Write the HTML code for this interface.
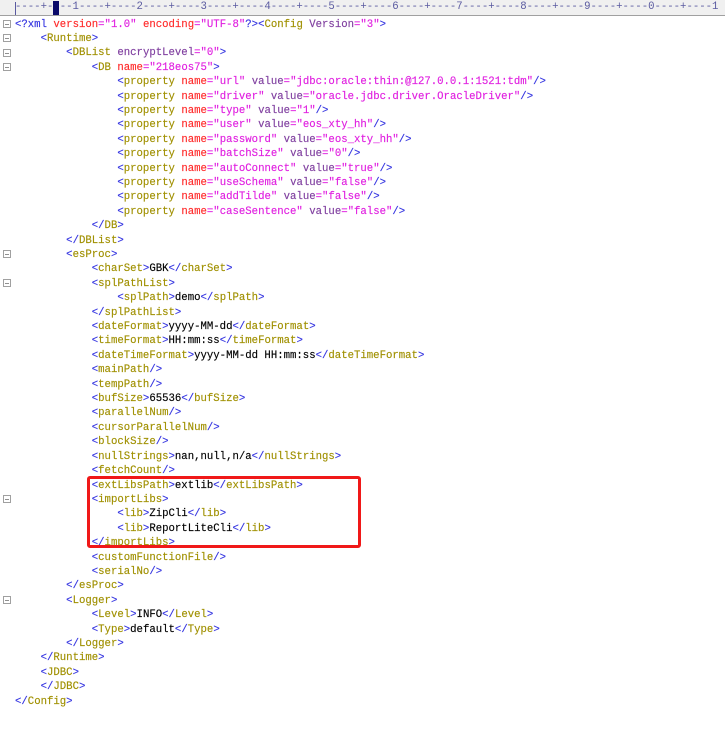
<!DOCTYPE html>
<html><head><meta charset="utf-8"><style>
body{margin:0;background:#fff;width:725px;height:752px;overflow:hidden;position:relative;font-family:"Liberation Mono",monospace;font-size:10.67px}
#ruler{position:absolute;left:0;top:0;width:725px;height:15px;background:#f0f0f0;border-bottom:1px solid #a0a0a0;color:#5a5aa0;white-space:pre;line-height:15px}
#ruler span.r{position:absolute;left:15px;top:0}
#cur{position:absolute;left:53px;top:1px;width:6px;height:14px;background:#0a0a6a}
#vl{position:absolute;left:15px;top:2px;width:1px;height:13px;background:#5a5aa0}
#code{position:absolute;left:15px;top:17.5px;white-space:pre;line-height:14.4px;color:#000;-webkit-text-stroke:0.15px currentColor}
.b{color:#3333e0}.t{color:#a09000}.a{color:#ff2a2a}.p{color:#8040a0}.v{color:#e020e0}
.f{position:absolute;left:3px;width:8px;height:8px;border:1px solid #a0a0a0;box-sizing:border-box}
.f:after{content:"";position:absolute;left:1px;right:1px;top:3px;height:1px;background:#909090}
#box{position:absolute;left:87px;top:476px;width:274px;height:72px;border:3px solid #f01818;border-radius:3px;box-sizing:border-box}
</style></head><body>
<div id="ruler"><span class="r">----+----1----+----2----+----3----+----4----+----5----+----6----+----7----+----8----+----9----+----0----+----1</span><div id="vl"></div><div id="cur"></div></div>
<div class="f" style="top:20px"></div>
<div class="f" style="top:34px"></div>
<div class="f" style="top:49px"></div>
<div class="f" style="top:63px"></div>
<div class="f" style="top:250px"></div>
<div class="f" style="top:279px"></div>
<div class="f" style="top:495px"></div>
<div class="f" style="top:596px"></div>
<div id="code"><span class="b">&lt;?xml</span> <span class="a">version</span><span class="v">="1.0"</span> <span class="a">encoding</span><span class="v">="UTF-8"</span><span class="b">?&gt;&lt;</span><span class="t">Config</span> <span class="p">Version</span><span class="v">="3"</span><span class="b">&gt;</span>
    <span class="b">&lt;</span><span class="t">Runtime</span><span class="b">&gt;</span>
        <span class="b">&lt;</span><span class="t">DBList</span> <span class="p">encryptLevel</span><span class="v">="0"</span><span class="b">&gt;</span>
            <span class="b">&lt;</span><span class="t">DB</span> <span class="a">name</span><span class="v">="218eos75"</span><span class="b">&gt;</span>
                <span class="b">&lt;</span><span class="t">property</span> <span class="a">name</span><span class="v">="url"</span> <span class="p">value</span><span class="v">="jdbc:oracle:thin:@127.0.0.1:1521:tdm"</span><span class="b">/&gt;</span>
                <span class="b">&lt;</span><span class="t">property</span> <span class="a">name</span><span class="v">="driver"</span> <span class="p">value</span><span class="v">="oracle.jdbc.driver.OracleDriver"</span><span class="b">/&gt;</span>
                <span class="b">&lt;</span><span class="t">property</span> <span class="a">name</span><span class="v">="type"</span> <span class="p">value</span><span class="v">="1"</span><span class="b">/&gt;</span>
                <span class="b">&lt;</span><span class="t">property</span> <span class="a">name</span><span class="v">="user"</span> <span class="p">value</span><span class="v">="eos_xty_hh"</span><span class="b">/&gt;</span>
                <span class="b">&lt;</span><span class="t">property</span> <span class="a">name</span><span class="v">="password"</span> <span class="p">value</span><span class="v">="eos_xty_hh"</span><span class="b">/&gt;</span>
                <span class="b">&lt;</span><span class="t">property</span> <span class="a">name</span><span class="v">="batchSize"</span> <span class="p">value</span><span class="v">="0"</span><span class="b">/&gt;</span>
                <span class="b">&lt;</span><span class="t">property</span> <span class="a">name</span><span class="v">="autoConnect"</span> <span class="p">value</span><span class="v">="true"</span><span class="b">/&gt;</span>
                <span class="b">&lt;</span><span class="t">property</span> <span class="a">name</span><span class="v">="useSchema"</span> <span class="p">value</span><span class="v">="false"</span><span class="b">/&gt;</span>
                <span class="b">&lt;</span><span class="t">property</span> <span class="a">name</span><span class="v">="addTilde"</span> <span class="p">value</span><span class="v">="false"</span><span class="b">/&gt;</span>
                <span class="b">&lt;</span><span class="t">property</span> <span class="a">name</span><span class="v">="caseSentence"</span> <span class="p">value</span><span class="v">="false"</span><span class="b">/&gt;</span>
            <span class="b">&lt;/</span><span class="t">DB</span><span class="b">&gt;</span>
        <span class="b">&lt;/</span><span class="t">DBList</span><span class="b">&gt;</span>
        <span class="b">&lt;</span><span class="t">esProc</span><span class="b">&gt;</span>
            <span class="b">&lt;</span><span class="t">charSet</span><span class="b">&gt;</span>GBK<span class="b">&lt;/</span><span class="t">charSet</span><span class="b">&gt;</span>
            <span class="b">&lt;</span><span class="t">splPathList</span><span class="b">&gt;</span>
                <span class="b">&lt;</span><span class="t">splPath</span><span class="b">&gt;</span>demo<span class="b">&lt;/</span><span class="t">splPath</span><span class="b">&gt;</span>
            <span class="b">&lt;/</span><span class="t">splPathList</span><span class="b">&gt;</span>
            <span class="b">&lt;</span><span class="t">dateFormat</span><span class="b">&gt;</span>yyyy-MM-dd<span class="b">&lt;/</span><span class="t">dateFormat</span><span class="b">&gt;</span>
            <span class="b">&lt;</span><span class="t">timeFormat</span><span class="b">&gt;</span>HH:mm:ss<span class="b">&lt;/</span><span class="t">timeFormat</span><span class="b">&gt;</span>
            <span class="b">&lt;</span><span class="t">dateTimeFormat</span><span class="b">&gt;</span>yyyy-MM-dd HH:mm:ss<span class="b">&lt;/</span><span class="t">dateTimeFormat</span><span class="b">&gt;</span>
            <span class="b">&lt;</span><span class="t">mainPath</span><span class="b">/&gt;</span>
            <span class="b">&lt;</span><span class="t">tempPath</span><span class="b">/&gt;</span>
            <span class="b">&lt;</span><span class="t">bufSize</span><span class="b">&gt;</span>65536<span class="b">&lt;/</span><span class="t">bufSize</span><span class="b">&gt;</span>
            <span class="b">&lt;</span><span class="t">parallelNum</span><span class="b">/&gt;</span>
            <span class="b">&lt;</span><span class="t">cursorParallelNum</span><span class="b">/&gt;</span>
            <span class="b">&lt;</span><span class="t">blockSize</span><span class="b">/&gt;</span>
            <span class="b">&lt;</span><span class="t">nullStrings</span><span class="b">&gt;</span>nan,null,n/a<span class="b">&lt;/</span><span class="t">nullStrings</span><span class="b">&gt;</span>
            <span class="b">&lt;</span><span class="t">fetchCount</span><span class="b">/&gt;</span>
            <span class="b">&lt;</span><span class="t">extLibsPath</span><span class="b">&gt;</span>extlib<span class="b">&lt;/</span><span class="t">extLibsPath</span><span class="b">&gt;</span>
            <span class="b">&lt;</span><span class="t">importLibs</span><span class="b">&gt;</span>
                <span class="b">&lt;</span><span class="t">lib</span><span class="b">&gt;</span>ZipCli<span class="b">&lt;/</span><span class="t">lib</span><span class="b">&gt;</span>
                <span class="b">&lt;</span><span class="t">lib</span><span class="b">&gt;</span>ReportLiteCli<span class="b">&lt;/</span><span class="t">lib</span><span class="b">&gt;</span>
            <span class="b">&lt;/</span><span class="t">importLibs</span><span class="b">&gt;</span>
            <span class="b">&lt;</span><span class="t">customFunctionFile</span><span class="b">/&gt;</span>
            <span class="b">&lt;</span><span class="t">serialNo</span><span class="b">/&gt;</span>
        <span class="b">&lt;/</span><span class="t">esProc</span><span class="b">&gt;</span>
        <span class="b">&lt;</span><span class="t">Logger</span><span class="b">&gt;</span>
            <span class="b">&lt;</span><span class="t">Level</span><span class="b">&gt;</span>INFO<span class="b">&lt;/</span><span class="t">Level</span><span class="b">&gt;</span>
            <span class="b">&lt;</span><span class="t">Type</span><span class="b">&gt;</span>default<span class="b">&lt;/</span><span class="t">Type</span><span class="b">&gt;</span>
        <span class="b">&lt;/</span><span class="t">Logger</span><span class="b">&gt;</span>
    <span class="b">&lt;/</span><span class="t">Runtime</span><span class="b">&gt;</span>
    <span class="b">&lt;</span><span class="t">JDBC</span><span class="b">&gt;</span>
    <span class="b">&lt;/</span><span class="t">JDBC</span><span class="b">&gt;</span>
<span class="b">&lt;/</span><span class="t">Config</span><span class="b">&gt;</span></div>
<div id="box"></div>
</body></html>
